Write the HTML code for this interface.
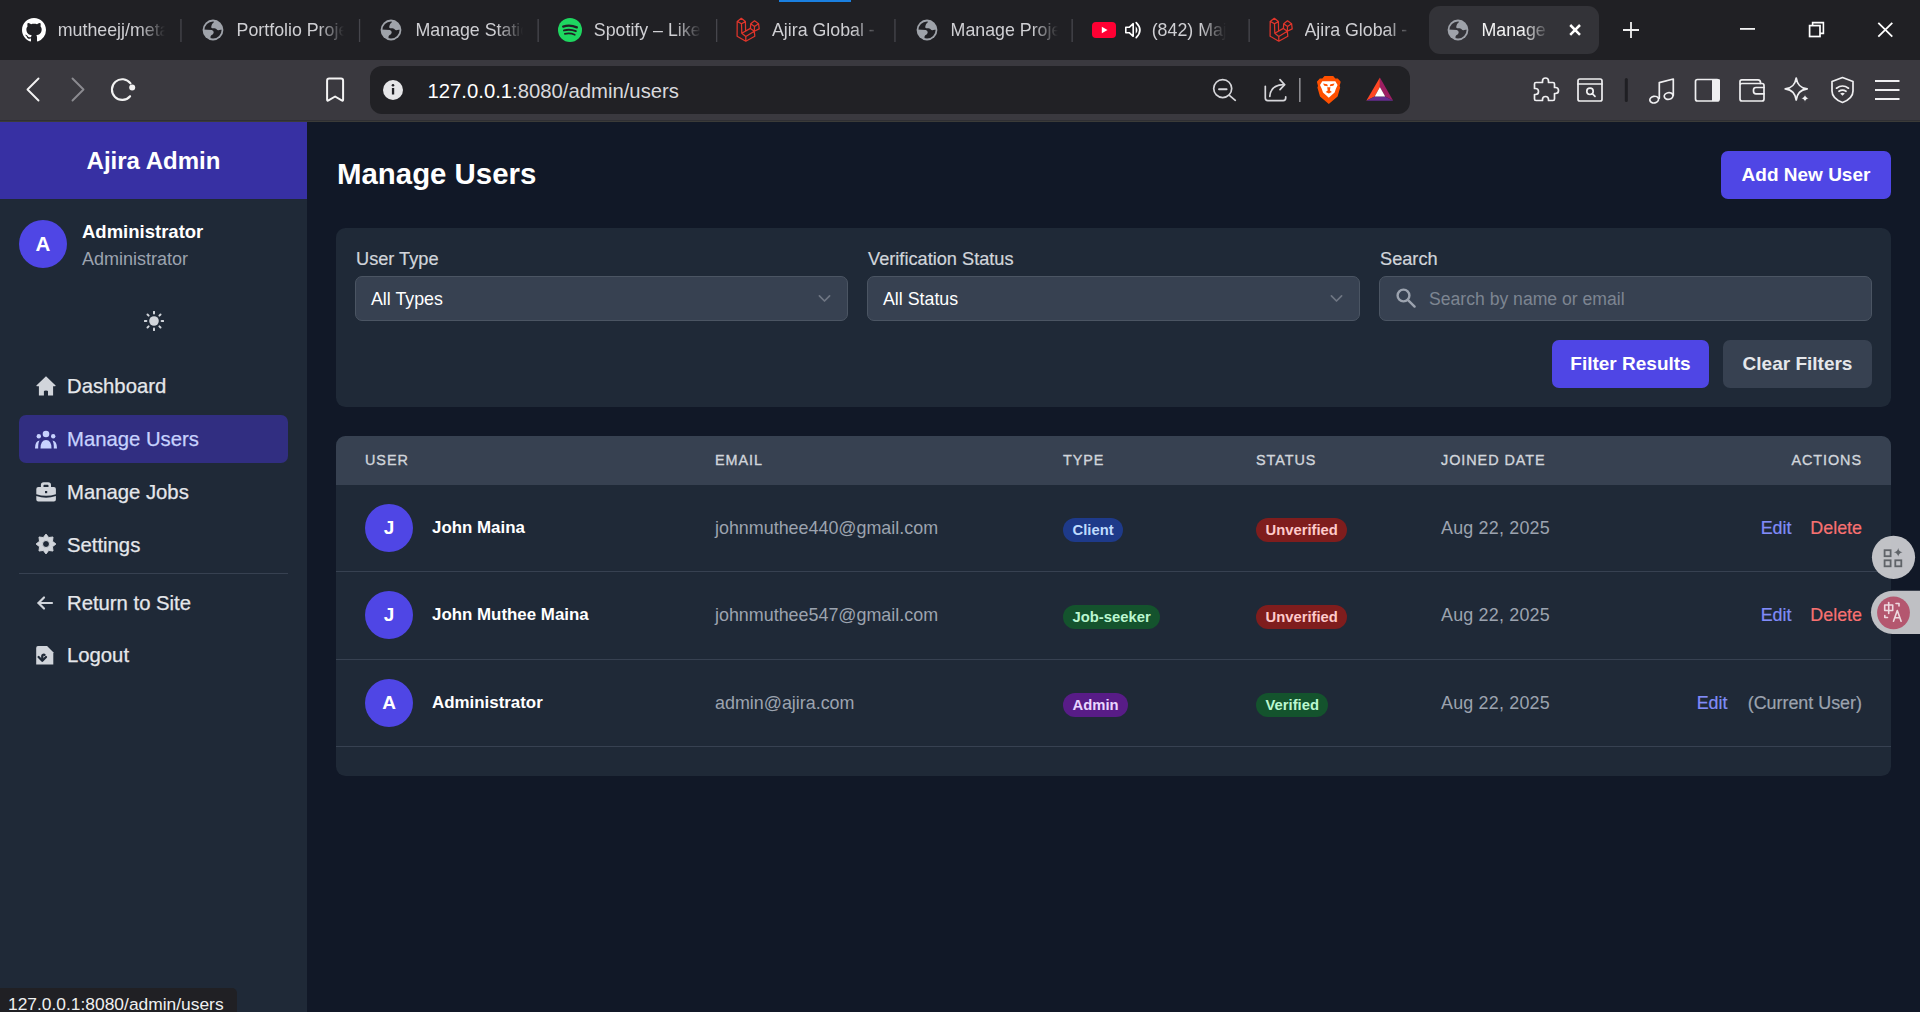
<!DOCTYPE html>
<html><head><meta charset="utf-8">
<style>
*{box-sizing:border-box;margin:0;padding:0}
html,body{width:1920px;height:1012px;overflow:hidden;background:#111827;font-family:"Liberation Sans",sans-serif;}
.abs{position:absolute}
#tabbar{position:absolute;left:0;top:0;width:1920px;height:60px;background:#202024}
.tab{position:absolute;top:6px;height:48px;color:#d6d6d9;font-size:18px;}
.tab .t{position:absolute;top:13px;white-space:nowrap;overflow:hidden}
.sep{position:absolute;top:19px;width:1px;height:24px;background:#4a4a50}
#toolbar{position:absolute;left:0;top:60px;width:1920px;height:60px;background:#3a393f}
#tline{position:absolute;left:0;top:120px;width:1920px;height:2px;background:linear-gradient(#2f2f34 50%,#3b3b38 50%)}
#url{position:absolute;left:370px;top:66px;width:1040px;height:48px;background:#212125;border-radius:12px}
#sidebar{position:absolute;left:0;top:122px;width:307px;height:890px;background:#1f2937}
#sbhead{position:absolute;left:0;top:0;width:307px;height:77px;background:#3730a3;color:#fff;font-weight:bold;font-size:24px;text-align:center;line-height:77px}
.nav{position:absolute;left:19px;width:269px;height:48px;border-radius:7px;color:#e5e7eb;font-size:20.3px;-webkit-text-stroke:0.25px currentColor}
.nav .lbl{position:absolute;left:48px;top:12px;line-height:24px}
.nav svg{position:absolute;left:16px;top:14px}
#main{position:absolute;left:307px;top:122px;width:1613px;height:890px;background:#111827}
.card{position:absolute;background:#1f2937;border-radius:9.5px}
.lab{position:absolute;color:#d1d5db;font-size:18.2px;top:21px;-webkit-text-stroke:0.2px currentColor}
.sel{position:absolute;top:48px;height:45px;width:493px;background:#374151;border:1px solid #4b5563;border-radius:7px;color:#fff;font-size:17.8px}
.btn{position:absolute;border-radius:7px;color:#fff;font-weight:bold;font-size:19px;text-align:center}
.th{position:absolute;top:16px;color:#d1d5db;font-size:14.4px;font-weight:normal;letter-spacing:0.95px;-webkit-text-stroke:0.35px currentColor}
.row{position:absolute;left:0;width:1555px;height:87px;border-bottom:1px solid #374151}
.av{position:absolute;left:29px;top:19px;width:48px;height:48px;border-radius:50%;background:#4f46e5;color:#fff;font-weight:bold;font-size:19px;text-align:center;line-height:48px}
.nm{position:absolute;left:96px;top:33px;color:#fff;font-weight:bold;font-size:16.9px}
.em{position:absolute;left:379px;top:32.5px;color:#9ca3af;font-size:17.9px}
.badge{position:absolute;top:33px;height:24px;border-radius:12px;font-size:14.8px;font-weight:bold;line-height:24px;padding:0 9.5px}
.dt{position:absolute;left:1105px;top:32.5px;color:#9ca3af;font-size:17.9px;letter-spacing:0.2px}
.act{position:absolute;top:32.5px;font-size:17.9px;-webkit-text-stroke:0.2px currentColor}
.tt{position:absolute;top:18px;font-size:17.8px;line-height:24px;color:#cfcfd3;white-space:nowrap;overflow:hidden;-webkit-mask-image:linear-gradient(90deg,#000 calc(100% - 26px),rgba(0,0,0,0.35) calc(100% - 8px),transparent 100%)}
#status{position:absolute;left:0;top:988px;width:237px;height:24px;background:#202024;border-top-right-radius:5px;color:#f0f0f0;font-size:17.4px;line-height:24px;white-space:nowrap;overflow:hidden}
#status span{position:absolute;left:8px;top:4px}
</style></head><body>

<div id="tabbar">
  <div class="abs" style="left:779px;top:0;width:72px;height:2px;background:#1a7fe0"></div>
  <div class="abs" style="left:1429px;top:6px;width:170px;height:48px;background:#333338;border-radius:11px"></div>
  <svg class="abs" style="left:0;top:0" width="1920" height="60"><g transform="translate(22,18) scale(1.5)"><path fill="#ffffff" d="M8 0C3.58 0 0 3.58 0 8c0 3.54 2.29 6.53 5.47 7.59.4.07.55-.17.55-.38 0-.19-.01-.82-.01-1.49-2.01.37-2.530-.49-2.690-.94-.09-.23-.48-.94-.82-1.13-.28-.15-.68-.52-.01-.53.63-.01 1.08.58 1.23.82.72 1.21 1.87.87 2.33.66.07-.52.28-.87.51-1.07-1.78-.2-3.64-.89-3.64-3.95 0-.87.31-1.59.82-2.15-.08-.2-.36-1.02.08-2.120 0 0 .67-.21 2.2.82.64-.18 1.32-.27 2-.27.68 0 1.36.09 2 .27 1.53-1.04 2.2-.82 2.2-.82.44 1.1.16 1.92.08 2.12.51.56.82 1.27.82 2.15 0 3.07-1.87 3.75-3.65 3.95.29.25.54.73.54 1.48 0 1.07-.01 1.93-.01 2.2 0 .21.15.46.55.38A8.013 8.013 0 0016 8c0-4.42-3.58-8-8-8z"/></g><g transform="translate(202,19)"><circle cx="11" cy="11" r="10.4" fill="#9fa3aa"/><circle cx="11" cy="11" r="8.6" fill="#202024"/><g fill="#9fa3aa"><path d="M12.3 1.3 L11.8 3.3 Q9.2 5.3 9.3 7.3 L9.3 8.8 Q9.6 9.3 12.5 9.3 Q14.4 9.4 14.8 10.6 Q15.6 11.6 17.2 11 L20.6 10.4 A9.6 9.6 0 0 0 12.3 1.3 Z"/><path d="M1.4 10.6 L9.8 11.1 Q11.9 11.9 11.7 13.8 Q11.3 15.6 9.3 16.3 Q8.3 17 8.5 18.6 L8.6 20.5 A9.6 9.6 0 0 1 1.4 10.6 Z"/></g></g><g transform="translate(380,19)"><circle cx="11" cy="11" r="10.4" fill="#9fa3aa"/><circle cx="11" cy="11" r="8.6" fill="#202024"/><g fill="#9fa3aa"><path d="M12.3 1.3 L11.8 3.3 Q9.2 5.3 9.3 7.3 L9.3 8.8 Q9.6 9.3 12.5 9.3 Q14.4 9.4 14.8 10.6 Q15.6 11.6 17.2 11 L20.6 10.4 A9.6 9.6 0 0 0 12.3 1.3 Z"/><path d="M1.4 10.6 L9.8 11.1 Q11.9 11.9 11.7 13.8 Q11.3 15.6 9.3 16.3 Q8.3 17 8.5 18.6 L8.6 20.5 A9.6 9.6 0 0 1 1.4 10.6 Z"/></g></g><g transform="translate(558,18)"><circle cx="12" cy="12" r="12" fill="#1ed760"/><g stroke="#202024" stroke-linecap="round" fill="none"><path d="M5.2 8.6 Q12 6.3 18.8 9.4" stroke-width="2.3"/><path d="M6 12.4 Q12 10.6 17.8 13.2" stroke-width="2"/><path d="M6.8 15.9 Q12 14.6 16.8 16.8" stroke-width="1.6"/></g></g><g transform="translate(732,14)" stroke="#e0352b" stroke-width="1.25" fill="none" stroke-linejoin="round" stroke-linecap="round"><path d="M5.2 7.4 L9.3 4.3 L13.4 7.6 L9.5 9.8 Z M5.2 7.4 L5.1 22.2 L13.8 27.2 M9.5 9.8 L9.8 19.3 M13.4 7.6 L13.6 16.6 M9.8 19.3 L18.4 14.4 L22.3 17.2 L13.8 22.5 Z M13.8 22.5 L13.8 27.2 L22.8 22.2 L22.3 17.2 M18.7 9.8 L22.5 6.8 L26.6 9.7 L22.5 12.5 Z M18.7 9.8 L18.4 14.4 M22.5 12.5 L22.3 17.2 M26.6 9.7 L27.2 14.9 L22.3 17.2"/></g><g transform="translate(916,19)"><circle cx="11" cy="11" r="10.4" fill="#9fa3aa"/><circle cx="11" cy="11" r="8.6" fill="#202024"/><g fill="#9fa3aa"><path d="M12.3 1.3 L11.8 3.3 Q9.2 5.3 9.3 7.3 L9.3 8.8 Q9.6 9.3 12.5 9.3 Q14.4 9.4 14.8 10.6 Q15.6 11.6 17.2 11 L20.6 10.4 A9.6 9.6 0 0 0 12.3 1.3 Z"/><path d="M1.4 10.6 L9.8 11.1 Q11.9 11.9 11.7 13.8 Q11.3 15.6 9.3 16.3 Q8.3 17 8.5 18.6 L8.6 20.5 A9.6 9.6 0 0 1 1.4 10.6 Z"/></g></g><rect x="1092" y="22" width="24" height="16" rx="4" fill="#ff0033"/><path d="M1101.8 26.8 L1107.5 30 L1101.8 33.2 Z" fill="#fff"/><g><path d="M1125.8 27.3 L1129.2 27.3 L1133.2 23.7 L1133.2 36.3 L1129.2 32.7 L1125.8 32.7 Z" fill="none" stroke="#fff" stroke-width="1.6" stroke-linejoin="round"/><path d="M1135.7 26.2 Q1139.2 30 1135.7 33.8 Z" fill="#fff"/><path d="M1136.2 22.6 Q1143.6 30 1136.2 37.6" stroke="#fff" stroke-width="1.7" fill="none" stroke-linecap="round"/></g><g transform="translate(1265,14)" stroke="#e0352b" stroke-width="1.25" fill="none" stroke-linejoin="round" stroke-linecap="round"><path d="M5.2 7.4 L9.3 4.3 L13.4 7.6 L9.5 9.8 Z M5.2 7.4 L5.1 22.2 L13.8 27.2 M9.5 9.8 L9.8 19.3 M13.4 7.6 L13.6 16.6 M9.8 19.3 L18.4 14.4 L22.3 17.2 L13.8 22.5 Z M13.8 22.5 L13.8 27.2 L22.8 22.2 L22.3 17.2 M18.7 9.8 L22.5 6.8 L26.6 9.7 L22.5 12.5 Z M18.7 9.8 L18.4 14.4 M22.5 12.5 L22.3 17.2 M26.6 9.7 L27.2 14.9 L22.3 17.2"/></g><rect x="180.3" y="19" width="1.3" height="23" fill="#46464c"/><rect x="358.9" y="19" width="1.3" height="23" fill="#46464c"/><rect x="537.5" y="19" width="1.3" height="23" fill="#46464c"/><rect x="716.0" y="19" width="1.3" height="23" fill="#46464c"/><rect x="894.3" y="19" width="1.3" height="23" fill="#46464c"/><rect x="1071.5" y="19" width="1.3" height="23" fill="#46464c"/><rect x="1248.5" y="19" width="1.3" height="23" fill="#46464c"/><g transform="translate(1447,19)"><circle cx="11" cy="11" r="10.4" fill="#9fa3aa"/><circle cx="11" cy="11" r="8.6" fill="#333338"/><g fill="#9fa3aa"><path d="M12.3 1.3 L11.8 3.3 Q9.2 5.3 9.3 7.3 L9.3 8.8 Q9.6 9.3 12.5 9.3 Q14.4 9.4 14.8 10.6 Q15.6 11.6 17.2 11 L20.6 10.4 A9.6 9.6 0 0 0 12.3 1.3 Z"/><path d="M1.4 10.6 L9.8 11.1 Q11.9 11.9 11.7 13.8 Q11.3 15.6 9.3 16.3 Q8.3 17 8.5 18.6 L8.6 20.5 A9.6 9.6 0 0 1 1.4 10.6 Z"/></g></g>
    <path d="M1570.2 25 L1580 34.8 M1580 25 L1570.2 34.8" stroke="#fff" stroke-width="2.5"/>
    <path d="M1631 22 L1631 38 M1623 30 L1639 30" stroke="#f0f0f0" stroke-width="1.8"/>
    <path d="M1740 28.9 L1755 28.9" stroke="#fff" stroke-width="1.7"/>
    <rect x="1809.6" y="25.6" width="10.4" height="10.9" fill="none" stroke="#fff" stroke-width="1.7"/>
    <path d="M1812.6 25.6 L1812.6 22.6 L1823.4 22.6 L1823.4 33.4 L1820 33.4" fill="none" stroke="#fff" stroke-width="1.6"/>
    <path d="M1878.3 22.8 L1892.3 36.7 M1892.3 22.8 L1878.3 36.7" stroke="#fff" stroke-width="1.8"/>
  </svg>
  <div class="tt" style="left:57.8px;width:107px">mutheejj/meta-ads</div><div class="tt" style="left:236.6px;width:107px">Portfolio Project</div><div class="tt" style="left:415.5px;width:107px">Manage Static</div><div class="tt" style="left:593.8px;width:107px">Spotify – Liked</div><div class="tt" style="left:772px;width:107px">Ajira Global - Find</div><div class="tt" style="left:950.6px;width:107px">Manage Projects</div><div class="tt" style="left:1151.7px;width:74px">(842) Major</div><div class="tt" style="left:1304.5px;width:107px">Ajira Global - Find</div>
  <div class="tt" style="left:1481.5px;width:67px;color:#f2f2f2">Manage Users</div>
</div>
<div id="toolbar">
<svg class="abs" style="left:0;top:0" width="1920" height="60" viewBox="0 60 1920 60">
  <g fill="none" stroke-linecap="round" stroke-linejoin="round">
    <path d="M38.5 78.5 L27.5 89.5 L38.5 100.5" stroke="#f2f2f2" stroke-width="1.9"/>
    <path d="M72.5 78.5 L83.5 89.5 L72.5 100.5" stroke="#8b8b90" stroke-width="1.9"/>
    <path d="M130.1 96.2 A10.3 10.3 0 1 1 130.5 83.4" stroke="#f2f2f2" stroke-width="2.1"/>
  </g>
  <circle cx="132.2" cy="87.4" r="3" fill="#f2f2f2"/>
  <path d="M329.2 78.6 L341 78.6 Q343.1 78.6 343.1 80.7 L343.1 99.6 Q343.1 101.2 341.7 100.4 L335.1 96.5 L328.5 100.4 Q327.1 101.2 327.1 99.6 L327.1 80.7 Q327.1 78.6 329.2 78.6 Z" fill="none" stroke="#f4f4f4" stroke-width="2" stroke-linejoin="round"/>
  <rect x="370" y="66" width="1040" height="48" rx="12" fill="#212125"/>
  <circle cx="393" cy="90" r="10" fill="#e6e6e8"/>
  <rect x="391.9" y="88" width="2.3" height="6.5" fill="#212125"/><circle cx="393" cy="85.3" r="1.3" fill="#212125"/>
  <g fill="none" stroke="#d6d6da" stroke-width="1.7" stroke-linecap="round">
    <circle cx="1222.7" cy="88.6" r="9"/>
    <path d="M1229.4 95.3 L1235.3 100.3"/>
    <path d="M1219 89.3 L1226.6 89.3" stroke-width="1.9"/>
    <path d="M1265.3 86.3 L1265.3 98.1 Q1265.3 100.6 1267.8 100.6 L1283.2 100.6 Q1285.7 100.6 1285.7 98.1 L1285.7 96.8"/>
    <path d="M1269.8 96.4 Q1270.5 85 1284 84.7"/>
    <path d="M1280 79.6 L1284.6 84.7 L1280 89.6"/>
  </g>
  <rect x="1299" y="78" width="1.6" height="24" fill="#8b8b90"/>
  <path d="M1324.5 76 L1333.2 76 L1335.3 78.5 L1337.8 78.5 L1340.7 81.8 L1339.6 86 L1340.2 87.5 L1337.6 96.4 L1328.8 103.9 L1320 96.4 L1317.4 87.5 L1318 86 L1316.9 81.8 L1319.8 78.5 L1322.3 78.5 Z" fill="#ff5000"/>
  <path d="M1320 85 L1322.3 81.2 L1335.3 81.2 L1337.6 85 L1335.8 89 L1334.6 92.6 L1331.5 95.2 L1328.8 97.8 L1326.1 95.2 L1323 92.6 L1321.8 89 Z" fill="#ffffff"/>
  <path d="M1323 83.4 L1327.2 84.2 L1327.9 86.3 L1324.3 85.7 Z M1334.6 83.4 L1330.4 84.2 L1329.7 86.3 L1333.3 85.7 Z M1327.2 87.2 L1330.4 87.2 L1329.9 90.6 L1331.9 92.1 L1328.8 93.6 L1325.7 92.1 L1327.7 90.6 Z" fill="#ff5000"/>
  <path d="M1379.9 77.6 L1366.3 100.8 L1374.7 96.4 L1379.9 87 Z" fill="#ff4724"/>
  <path d="M1379.9 77.6 L1393.2 100.8 L1385.2 96.4 L1379.9 87 Z" fill="#9e1f63"/>
  <path d="M1366.3 100.8 L1393.2 100.8 L1385.2 96.4 L1374.7 96.4 Z" fill="#662d91"/>
  <path d="M1379.9 87 L1374.7 96.4 L1385.2 96.4 Z" fill="#ffffff"/>
  <g fill="none" stroke="#efeff1" stroke-width="1.7" stroke-linejoin="round" stroke-linecap="round">
    <path d="M1542.5 82.5 L1542.5 81 A3 3 0 0 1 1548.5 81 L1548.5 82.5 L1553 82.5 Q1554.5 82.5 1554.5 84 L1554.5 87.5 L1555.5 87.5 A3 3 0 0 1 1555.5 93.5 L1554.5 93.5 L1554.5 99 Q1554.5 100.5 1553 100.5 L1548.5 100.5 L1548.5 99.5 A3 3 0 0 0 1542.5 99.5 L1542.5 100.5 L1536 100.5 Q1534.5 100.5 1534.5 99 L1534.5 94.5 L1535.5 94.5 A3 3 0 0 0 1535.5 88.5 L1534.5 88.5 L1534.5 84 Q1534.5 82.5 1536 82.5 Z"/>
    <rect x="1578" y="79" width="24" height="22" rx="1.8"/>
    <path d="M1578 84 L1602 84"/>
    <circle cx="1590" cy="91.3" r="3.2"/>
    <path d="M1592.3 93.6 L1595 96.3"/>
    <ellipse cx="1654.2" cy="99.6" rx="4.4" ry="3.3" transform="rotate(-12 1654.2 99.6)"/>
    <ellipse cx="1668.6" cy="96" rx="4.4" ry="3.3" transform="rotate(-12 1668.6 96)"/>
    <path d="M1659.3 98.2 L1659.3 82.6 L1673.3 79 L1673.3 95.2"/>
    <rect x="1695.5" y="79.5" width="23.5" height="21.5" rx="2"/>
    <path d="M1740 84 L1740 81.5 Q1740 79.8 1741.8 79.8 L1758 79.8 Q1760.5 79.8 1760.5 82.5 L1760.5 83.5"/>
    <rect x="1740" y="83.5" width="24" height="17.5" rx="2"/>
    <path d="M1764 87.5 L1756 87.5 Q1753.5 87.5 1753.5 90 L1753.5 91.3 Q1753.5 93.8 1756 93.8 L1764 93.8"/>
    <path d="M1796.2 78 C1797.3 84.5 1800 87.8 1807.2 88.9 C1800 90 1797.3 93.3 1796.2 100 C1795.1 93.3 1792.4 90 1785.2 88.9 C1792.4 87.8 1795.1 84.5 1796.2 78 Z"/>
    <path d="M1842.5 77.5 L1853 81.5 L1853 91 Q1853 98.5 1842.5 102.5 Q1832 98.5 1832 91 L1832 81.5 Z"/>
    <path d="M1836.5 88.2 Q1842.5 83.8 1848.5 88.2"/>
    <path d="M1839 91.3 Q1842.5 88.8 1846 91.3"/>
  </g>
  <path d="M1720 79.5 L1712 79.5 L1712 101 L1717 101 Q1720 101 1720 98 Z" fill="#efeff1"/>
  <path d="M1805 94.2 Q1805.6 97.6 1809.2 98.3 Q1805.6 99 1805 102.4 Q1804.4 99 1800.8 98.3 Q1804.4 97.6 1805 94.2 Z" fill="#efeff1" stroke="#3a393f" stroke-width="0.8"/>
  <path d="M1840.2 93.6 Q1842.5 92 1844.8 93.6 L1842.5 95.8 Z" fill="#efeff1"/>
  <rect x="1624.8" y="78" width="3" height="24" rx="1.5" fill="#1f1f23"/>
  <g stroke="#efeff1" stroke-width="1.8"><path d="M1875 81 L1899.5 81 M1875 90 L1899.5 90 M1875 99 L1899.5 99"/></g>
  <text x="427.5" y="97.9" font-family="Liberation Sans" font-size="20.3" fill="#ffffff">127.0.0.1<tspan fill="#d9d9dd">:8080/admin/users</tspan></text>
</svg>
</div>
<div id="tline"></div>

<div id="sidebar">
  <div id="sbhead">Ajira Admin</div>
  <div class="abs" style="left:19px;top:98px;width:48px;height:48px;border-radius:50%;background:#4f46e5;color:#fff;font-weight:bold;font-size:20.5px;text-align:center;line-height:48px">A</div>
  <div class="abs" style="left:82px;top:99px;color:#fff;font-weight:bold;font-size:18.5px">Administrator</div>
  <div class="abs" style="left:82px;top:126.5px;color:#9ca3af;font-size:18px">Administrator</div>
  <svg class="abs" style="left:144px;top:189px" width="20" height="20" viewBox="0 0 20 20"><circle cx="10" cy="10" r="4.8" fill="#d1d5db"/><g stroke="#d1d5db" stroke-width="2" stroke-linecap="round"><line x1="17.60" y1="10.00" x2="19.20" y2="10.00"/><line x1="15.37" y1="15.37" x2="16.51" y2="16.51"/><line x1="10.00" y1="17.60" x2="10.00" y2="19.20"/><line x1="4.63" y1="15.37" x2="3.49" y2="16.51"/><line x1="2.40" y1="10.00" x2="0.80" y2="10.00"/><line x1="4.63" y1="4.63" x2="3.49" y2="3.49"/><line x1="10.00" y1="2.40" x2="10.00" y2="0.80"/><line x1="15.37" y1="4.63" x2="16.51" y2="3.49"/></g></svg>
  <div class="nav" style="top:240px"><svg width="22" height="22" viewBox="0 0 22 22"><path d="M11 0.3 L20.6 9.5 Q21 10.3 20 10.3 L18.1 10.3 L18.1 19.6 L13 19.6 L13 15.2 Q13 14.4 11 14.4 Q8.9 14.4 8.9 15.2 L8.9 19.6 L3.9 19.6 L3.9 10.3 L2 10.3 Q1 10.3 1.4 9.5 Z" fill="#d1d5db"/></svg><span class="lbl">Dashboard</span></div>
  <div class="nav" style="top:293px;background:#312e81;color:#c7d2fe"><svg style="top:15px" width="22" height="20" viewBox="0 0 22 20"><g fill="#c7d2fe"><circle cx="11" cy="4" r="3.3"/><circle cx="3.8" cy="6.3" r="2.2"/><circle cx="18.2" cy="6.3" r="2.2"/><path d="M5.5 18.5 Q5.5 10 11 10 Q16.5 10 16.5 18.5 Z"/><path d="M0 18.5 Q0 11 4.5 10.5 Q3 13 3.2 18.5 Z"/><path d="M22 18.5 Q22 11 17.5 10.5 Q19 13 18.8 18.5 Z"/></g></svg><span class="lbl">Manage Users</span></div>
  <div class="nav" style="top:346px"><svg width="22" height="22" viewBox="0 0 22 22"><g fill="#d1d5db"><path d="M5.9 4.9 L5.9 3 Q5.9 0.2 8.7 0.2 L13.2 0.2 Q16 0.2 16 3 L16 4.9 L13.5 4.9 L13.5 3.6 Q13.5 2.8 12.7 2.8 L9.3 2.8 Q8.5 2.8 8.5 3.6 L8.5 4.9 Z"/><path d="M1.3 6.9 Q1.3 4.9 3.3 4.9 L18.9 4.9 Q20.9 4.9 20.9 6.9 L20.9 12.3 Q11 15.3 1.3 12.3 Z"/><path d="M1.3 14.1 Q11 17.2 20.9 14.1 L20.9 17.6 Q20.9 19.6 18.9 19.6 L3.3 19.6 Q1.3 19.6 1.3 17.6 Z"/></g><rect x="10" y="9" width="2.2" height="2.2" fill="#1f2937"/></svg><span class="lbl">Manage Jobs</span></div>
  <div class="nav" style="top:399px"><svg style="top:13px" width="22" height="22" viewBox="0 0 22 22"><path fill="#d1d5db" stroke="#d1d5db" stroke-width="1" stroke-linejoin="round" fill-rule="evenodd" d="M11.00 0.10 L13.68 3.53 L18.00 3.00 L17.47 7.32 L20.90 10.00 L17.47 12.68 L18.00 17.00 L13.68 16.47 L11.00 19.90 L8.32 16.47 L4.00 17.00 L4.53 12.68 L1.10 10.00 L4.53 7.32 L4.00 3.00 L8.32 3.53 Z M11 6.5 Q14.5 6.5 14.5 10 Q14.5 13.5 11 13.5 Q7.5 13.5 7.5 10 Q7.5 6.5 11 6.5 Z"/></svg><span class="lbl">Settings</span></div>
  <div class="abs" style="left:19px;top:451px;width:269px;height:1px;background:#374151"></div>
  <div class="nav" style="top:457px"><svg width="20" height="20" viewBox="0 0 20 20"><g stroke="#d1d5db" stroke-width="2.2" fill="none" stroke-linecap="round" stroke-linejoin="round"><path d="M17 10 L3.5 10"/><path d="M9 4.5 L3.5 10 L9 15.5"/></g></svg><span class="lbl">Return to Site</span></div>
  <div class="nav" style="top:509px"><svg width="22" height="22" viewBox="0 0 22 22"><path fill="#d1d5db" d="M3 1.1 L12.1 1.1 L18.3 7.3 L18.3 19.6 L1.2 19.6 L1.2 2.9 Q1.2 1.1 3 1.1 Z"/><g stroke="#1f2937" stroke-width="2.3" fill="none" stroke-linecap="round" stroke-linejoin="round"><path d="M3.6 12 L7.3 15.8 L11 12"/><path d="M7.3 15 L7.3 11 Q7.3 9.4 9.5 9.8"/></g></svg><span class="lbl">Logout</span></div>
</div>

<div id="main">
  <div class="abs" style="left:30px;top:34.5px;color:#fff;font-weight:bold;font-size:29.4px">Manage Users</div>
  <div class="btn" style="left:1414px;top:29px;width:170px;height:48px;background:#4f46e5;line-height:48px">Add New User</div>

  <div class="card" style="left:29px;top:106px;width:1555px;height:179px">
    <div class="lab" style="left:20px">User Type</div>
    <div class="sel" style="left:19px"><span class="abs" style="left:15px;top:12px">All Types</span><svg class="abs" style="right:16px;top:15px" width="14" height="14" viewBox="0 0 14 14"><path d="M2.4 3.9 L7.5 9 L12.6 3.9" stroke="#6f7683" stroke-width="1.7" fill="none" stroke-linecap="round" stroke-linejoin="round"/></svg></div>
    <div class="lab" style="left:532px">Verification Status</div>
    <div class="sel" style="left:531px"><span class="abs" style="left:15px;top:12px">All Status</span><svg class="abs" style="right:16px;top:15px" width="14" height="14" viewBox="0 0 14 14"><path d="M2.4 3.9 L7.5 9 L12.6 3.9" stroke="#6f7683" stroke-width="1.7" fill="none" stroke-linecap="round" stroke-linejoin="round"/></svg></div>
    <div class="lab" style="left:1044px">Search</div>
    <div class="sel" style="left:1043px"><svg class="abs" style="left:16px;top:11px" width="21" height="21" viewBox="0 0 21 21"><circle cx="7.5" cy="7.5" r="5.9" stroke="#9ca3af" stroke-width="2.4" fill="none"/><path d="M11.8 11.8 L18.6 18.6" stroke="#9ca3af" stroke-width="2.4" stroke-linecap="round"/></svg><span class="abs" style="left:49px;top:12px;font-size:17.6px;color:#7d8591">Search by name or email</span></div>
    <div class="btn" style="left:1216px;top:112px;width:157px;height:48px;background:#4f46e5;line-height:48px">Filter Results</div>
    <div class="btn" style="left:1387px;top:112px;width:149px;height:48px;background:#374151;line-height:48px;color:#e5e7eb">Clear Filters</div>
  </div>

  <div class="card" style="left:29px;top:314px;width:1555px;height:340px;overflow:hidden">
    <div class="abs" style="left:0;top:0;width:1555px;height:49px;background:#374151">
      <div class="th" style="left:29px">USER</div>
      <div class="th" style="left:379px">EMAIL</div>
      <div class="th" style="left:727px">TYPE</div>
      <div class="th" style="left:920px">STATUS</div>
      <div class="th" style="left:1105px">JOINED DATE</div>
      <div class="th" style="right:29px">ACTIONS</div>
    </div>
    <div class="row" style="top:49px">
      <div class="av">J</div><div class="nm">John Maina</div><div class="em">johnmuthee440@gmail.com</div>
      <div class="badge" style="left:727px;background:#1e3a8a;color:#bfdbfe">Client</div>
      <div class="badge" style="left:920px;background:#7f1d1d;color:#fecaca">Unverified</div>
      <div class="dt">Aug 22, 2025</div>
      <div class="act" style="right:99.5px;color:#818cf8">Edit</div><div class="act" style="right:29px;color:#f87171">Delete</div>
    </div>
    <div class="row" style="top:136px;height:88px">
      <div class="av">J</div><div class="nm">John Muthee Maina</div><div class="em">johnmuthee547@gmail.com</div>
      <div class="badge" style="left:727px;background:#14532d;color:#bbf7d0">Job-seeker</div>
      <div class="badge" style="left:920px;background:#7f1d1d;color:#fecaca">Unverified</div>
      <div class="dt">Aug 22, 2025</div>
      <div class="act" style="right:99.5px;color:#818cf8">Edit</div><div class="act" style="right:29px;color:#f87171">Delete</div>
    </div>
    <div class="row" style="top:224px">
      <div class="av">A</div><div class="nm">Administrator</div><div class="em">admin@ajira.com</div>
      <div class="badge" style="left:727px;background:#581c87;color:#e9d5ff">Admin</div>
      <div class="badge" style="left:920px;background:#14532d;color:#bbf7d0">Verified</div>
      <div class="dt">Aug 22, 2025</div>
      <div class="act" style="right:163.5px;color:#818cf8">Edit</div><div class="act" style="right:29px;color:#9ca3af">(Current User)</div>
    </div>
  </div>
</div>

<svg class="abs" style="left:1860px;top:525px" width="60" height="120" viewBox="1860 525 60 120">
  <circle cx="1893.5" cy="557.3" r="21.6" fill="#c6c7cb" fill-opacity="0.97"/>
  <g fill="none" stroke="#5f6368" stroke-width="1.8"><rect x="1884.6" y="550.2" width="6" height="6"/><rect x="1884.6" y="560.3" width="6" height="6"/><rect x="1895.3" y="560.3" width="6" height="6"/></g>
  <path d="M1898.2 548 Q1898.8 551.7 1902.5 552.3 Q1898.8 552.9 1898.2 556.6 Q1897.6 552.9 1893.9 552.3 Q1897.6 551.7 1898.2 548 Z" fill="#5f6368"/>
  <path d="M1892.5 590.8 L1920 590.8 L1920 633.9 L1892.5 633.9 A21.55 21.55 0 0 1 1892.5 590.8 Z" fill="#bfc0c4"/>
  <circle cx="1893.5" cy="612.8" r="16.4" fill="#b4576f"/>
  <g fill="none" stroke="#eed9df" stroke-width="1.6" stroke-linecap="round" stroke-linejoin="round">
    <rect x="1884.7" y="605" width="8" height="5.5"/><path d="M1888.7 602.5 L1888.7 613.5"/>
    <path d="M1884.8 615.5 L1884.8 617.5 L1887.5 617.5"/><path d="M1896 603.5 L1899 603.5 L1899 606"/>
    <path d="M1893.5 621.3 L1897.3 610.5 L1901.1 621.3 M1894.8 617.7 L1899.8 617.7"/>
  </g>
</svg>
<div id="status"><span>127.0.0.1:8080/admin/users</span></div>
</body></html>
